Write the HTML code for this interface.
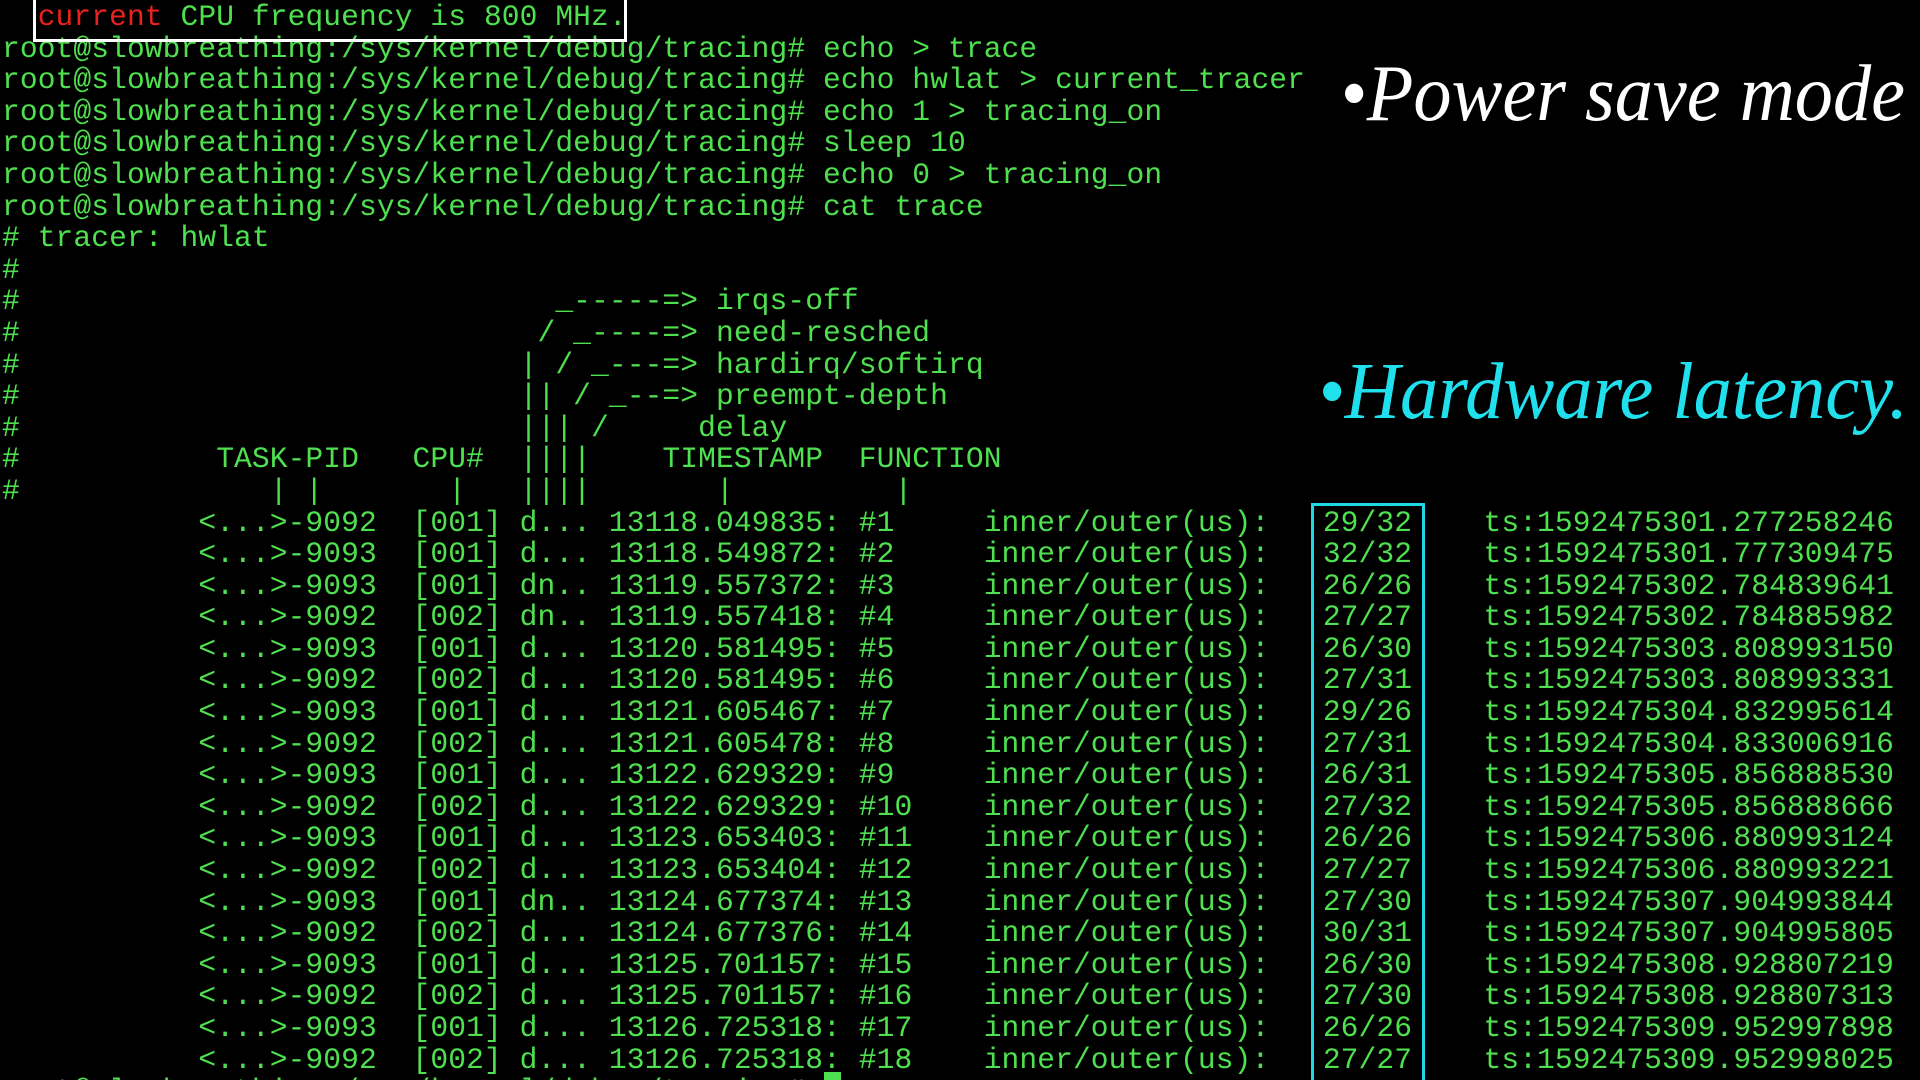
<!DOCTYPE html>
<html><head><meta charset="utf-8"><style>
html,body{margin:0;padding:0;background:#000;width:1920px;height:1080px;overflow:hidden}
#wrap{position:relative;width:1920px;height:1080px;overflow:hidden}
pre{position:absolute;left:2px;top:2px;margin:0;font-family:"Liberation Mono","DejaVu Sans Mono",monospace;font-size:29.6px;line-height:31.6px;color:#4fe04f;letter-spacing:0.09px;white-space:pre}
.r{color:#e8221e}
#wbox{position:absolute;left:33px;top:-4px;width:588px;height:40px;border:3px solid #fff}
#cbox{position:absolute;left:1311px;top:503px;width:108px;height:580px;border:3px solid #1fd8e6}
#cur{position:absolute;left:824px;top:1072px;width:17px;height:12px;background:#4fe04f}
svg{position:absolute;left:0;top:0}
</style></head><body><div id="wrap">
<pre>  <span class="r">current</span> CPU frequency is 800 MHz.
root@slowbreathing:/sys/kernel/debug/tracing# echo &gt; trace
root@slowbreathing:/sys/kernel/debug/tracing# echo hwlat &gt; current_tracer
root@slowbreathing:/sys/kernel/debug/tracing# echo 1 &gt; tracing_on
root@slowbreathing:/sys/kernel/debug/tracing# sleep 10
root@slowbreathing:/sys/kernel/debug/tracing# echo 0 &gt; tracing_on
root@slowbreathing:/sys/kernel/debug/tracing# cat trace
# tracer: hwlat
#
#                              _-----=&gt; irqs-off
#                             / _----=&gt; need-resched
#                            | / _---=&gt; hardirq/softirq
#                            || / _--=&gt; preempt-depth
#                            ||| /     delay
#           TASK-PID   CPU#  ||||    TIMESTAMP  FUNCTION
#              | |       |   ||||       |         |
           &lt;...&gt;-9092  [001] d... 13118.049835: #1     inner/outer(us):   29/32    ts:1592475301.277258246
           &lt;...&gt;-9093  [001] d... 13118.549872: #2     inner/outer(us):   32/32    ts:1592475301.777309475
           &lt;...&gt;-9093  [001] dn.. 13119.557372: #3     inner/outer(us):   26/26    ts:1592475302.784839641
           &lt;...&gt;-9092  [002] dn.. 13119.557418: #4     inner/outer(us):   27/27    ts:1592475302.784885982
           &lt;...&gt;-9093  [001] d... 13120.581495: #5     inner/outer(us):   26/30    ts:1592475303.808993150
           &lt;...&gt;-9092  [002] d... 13120.581495: #6     inner/outer(us):   27/31    ts:1592475303.808993331
           &lt;...&gt;-9093  [001] d... 13121.605467: #7     inner/outer(us):   29/26    ts:1592475304.832995614
           &lt;...&gt;-9092  [002] d... 13121.605478: #8     inner/outer(us):   27/31    ts:1592475304.833006916
           &lt;...&gt;-9093  [001] d... 13122.629329: #9     inner/outer(us):   26/31    ts:1592475305.856888530
           &lt;...&gt;-9092  [002] d... 13122.629329: #10    inner/outer(us):   27/32    ts:1592475305.856888666
           &lt;...&gt;-9093  [001] d... 13123.653403: #11    inner/outer(us):   26/26    ts:1592475306.880993124
           &lt;...&gt;-9092  [002] d... 13123.653404: #12    inner/outer(us):   27/27    ts:1592475306.880993221
           &lt;...&gt;-9093  [001] dn.. 13124.677374: #13    inner/outer(us):   27/30    ts:1592475307.904993844
           &lt;...&gt;-9092  [002] d... 13124.677376: #14    inner/outer(us):   30/31    ts:1592475307.904995805
           &lt;...&gt;-9093  [001] d... 13125.701157: #15    inner/outer(us):   26/30    ts:1592475308.928807219
           &lt;...&gt;-9092  [002] d... 13125.701157: #16    inner/outer(us):   27/30    ts:1592475308.928807313
           &lt;...&gt;-9093  [001] d... 13126.725318: #17    inner/outer(us):   26/26    ts:1592475309.952997898
           &lt;...&gt;-9092  [002] d... 13126.725318: #18    inner/outer(us):   27/27    ts:1592475309.952998025
root@slowbreathing:/sys/kernel/debug/tracing# </pre>
<div id="wbox"></div>
<div id="cbox"></div>
<div id="cur"></div>
<svg width="1920" height="1080">
<text x="1340" y="120" fill="#fff" font-family="Liberation Serif, serif" font-style="italic" font-size="80" textLength="565" lengthAdjust="spacingAndGlyphs">•Power save mode</text>
<text x="1318" y="418" fill="#1fe0ec" font-family="Liberation Serif, serif" font-style="italic" font-size="80" textLength="590" lengthAdjust="spacingAndGlyphs">•Hardware latency.</text>
</svg>
</div></body></html>
